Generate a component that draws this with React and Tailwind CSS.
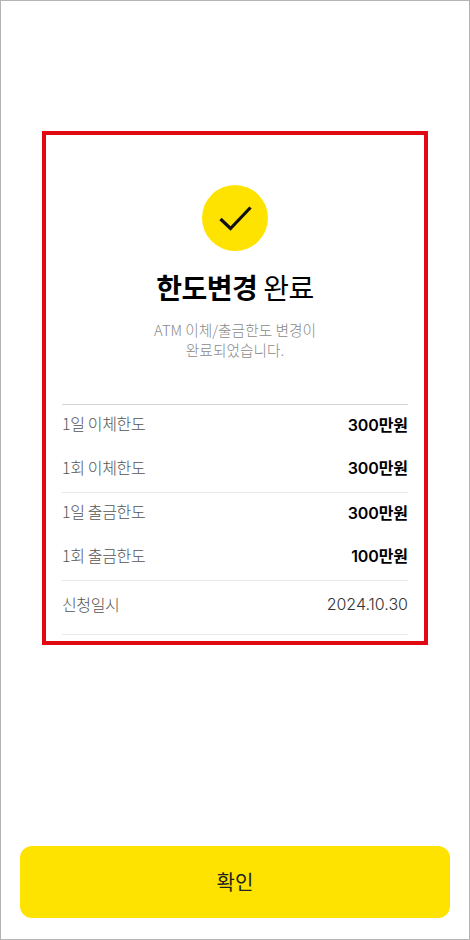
import React from "react";

const FONT = "font-['Noto_Sans_CJK_KR','Noto_Sans',sans-serif]";

const limits = [
  { label: "1일 이체한도", value: "300만원" },
  { label: "1회 이체한도", value: "300만원", line: true },
  { label: "1일 출금한도", value: "300만원" },
  { label: "1회 출금한도", value: "100만원", line: true },
];

const App = () => {
  return (
    <div className={`${FONT} w-[470px] h-[940px] bg-white border border-[#b4b4b4] flex flex-col items-center overflow-hidden`}>
      {/* Result card */}
      <div className="mt-[130px] w-[386px] h-[514px] border-4 border-[#e20a12] px-4 pt-[50px] flex flex-col">
        <div className="flex flex-col items-center">
          <div className="w-[66px] h-[66px] rounded-full bg-[#ffe300] flex items-center justify-center">
            <svg width="34" height="28" viewBox="0 0 34 28" fill="none">
              <path d="M2.5 15 L12.5 24.5 L32.5 3.5" stroke="#111111" strokeWidth="3.2" />
            </svg>
          </div>
          <h1 className="mt-[17px] text-[28px] leading-[38px] text-black tracking-[-0.45px]">
            <span className="font-bold">한도변경</span> 완료
          </h1>
          <p className="mt-[14px] text-[14.7px] leading-5 font-light text-[#8a8a8a] text-center">
            ATM 이체/출금한도 변경이
            <br />
            완료되었습니다.
          </p>
        </div>

        <div className="mt-[44px] border-t border-[#d4d4d4]">
          {limits.map((row) => (
            <div
              key={row.label}
              className={`flex items-center justify-between h-11 pb-2 ${row.line ? "border-b border-[#e8e8e8]" : ""}`}
            >
              <span className="text-[16px] leading-6 font-light tracking-[-0.35px] text-[#555555]">{row.label}</span>
              <span className="mt-[3px] font-['Inter','Noto_Sans_CJK_KR',sans-serif] text-[16px] leading-6 font-semibold tracking-[-0.1px] text-black">
                {row.value}
              </span>
            </div>
          ))}
          <div className="flex items-start justify-between h-[54px] pt-[11px] border-b border-[#e8e8e8]">
            <span className="text-[16px] leading-6 font-light tracking-[-0.35px] text-[#555555]">신청일시</span>
            <span className="font-['Inter','Noto_Sans_CJK_KR',sans-serif] text-[16px] leading-6 font-light text-[#333333]">2024.10.30</span>
          </div>
        </div>
      </div>

      <div className="flex-1" />

      <button className="w-[430px] h-[72px] mb-[21px] rounded-xl bg-[#ffe300] text-[20px] text-[#222222]">
        확인
      </button>
    </div>
  );
};

export default App;
